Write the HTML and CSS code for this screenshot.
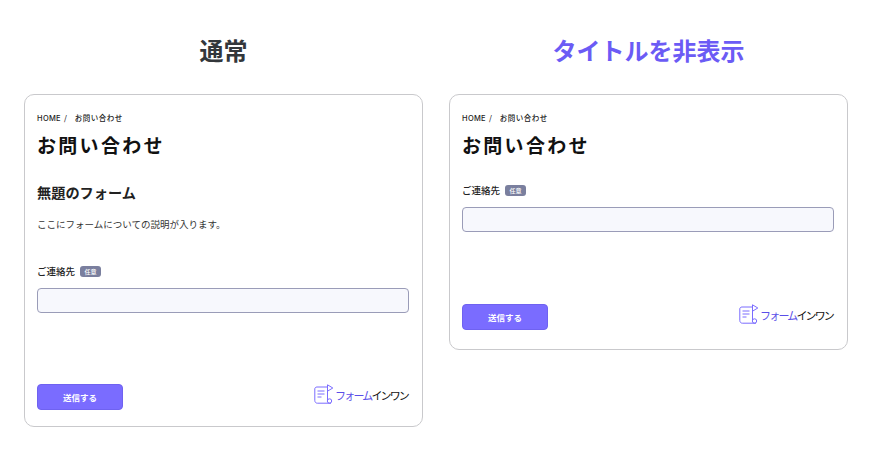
FILE: index.html
```html
<!DOCTYPE html>
<html lang="ja">
<head>
  <meta charset="UTF-8">
  <meta name="viewport" content="width=device-width, initial-scale=1.0">
  <title>タイトルの表示比較</title>
  <link rel="stylesheet" href="styles.css">
</head>
<body>
  <div class="compare">
    <!-- 通常 -->
    <div class="column">
      <h2 class="column-title">通常</h2>
      <div class="form-card">
        <div class="breadcrumb"><span class="home">HOME</span> <span class="slash">/</span> <span>お問い合わせ</span></div>
        <h1 class="page-title">お問い合わせ</h1>
        <h3 class="form-title">無題のフォーム</h3>
        <p class="form-desc">ここにフォームについての説明が入ります。</p>
        <div class="field field-normal">
          <div class="field-label">ご連絡先 <span class="badge">任意</span></div>
          <div class="field-input"></div>
        </div>
        <div class="form-footer">
          <div class="submit">送信する</div>
          <div class="logo">
            <svg class="logo-icon" viewBox="0 0 20 20" fill="none" stroke="#7a6cff" stroke-width="1">
              <path d="M3 3h10.5v13"/>
              <path d="M3 3C1.6 3 .8 3.8.8 5v11.5c0 1.5 1 2.7 2.5 2.7H17"/>
              <path d="M3.5 7h7M3.5 10h7M3.5 13h4"/>
              <path d="M13.5 .8v6.4L18.8 4z"/>
              <circle cx="15.5" cy="17" r="2.2"/>
            </svg>
            <span class="logo-text"><span class="logo-accent">フォーム</span>インワン</span>
          </div>
        </div>
      </div>
    </div>

    <!-- タイトルを非表示 -->
    <div class="column">
      <h2 class="column-title accent">タイトルを非表示</h2>
      <div class="form-card card-hidden">
        <div class="breadcrumb"><span class="home">HOME</span> <span class="slash">/</span> <span>お問い合わせ</span></div>
        <h1 class="page-title">お問い合わせ</h1>
        <div class="field field-hidden">
          <div class="field-label">ご連絡先 <span class="badge">任意</span></div>
          <div class="field-input"></div>
        </div>
        <div class="form-footer">
          <div class="submit">送信する</div>
          <div class="logo">
            <svg class="logo-icon" viewBox="0 0 20 20" fill="none" stroke="#7a6cff" stroke-width="1">
              <path d="M3 3h10.5v13"/>
              <path d="M3 3C1.6 3 .8 3.8.8 5v11.5c0 1.5 1 2.7 2.5 2.7H17"/>
              <path d="M3.5 7h7M3.5 10h7M3.5 13h4"/>
              <path d="M13.5 .8v6.4L18.8 4z"/>
              <circle cx="15.5" cy="17" r="2.2"/>
            </svg>
            <span class="logo-text"><span class="logo-accent">フォーム</span>インワン</span>
          </div>
        </div>
      </div>
    </div>
  </div>
</body>
</html>
```

FILE: styles.css
```css
body {
  margin: 0;
  background-color: white;
  color: #111;
  font-family: "Noto Sans CJK JP", "Noto Sans", sans-serif;
}

.compare {
  display: grid;
  grid-template-columns: 399px 399px;
  gap: 26px;
  padding: 32px 24px 0;
  align-items: start;
}

.column-title {
  margin: 0 0 26px;
  height: 36px;
  line-height: 36px;
  font-size: 24px;
  font-weight: 700;
  text-align: center;
  color: #33373b;
}

.column-title.accent {
  color: #6b5bf5;
}

.form-card {
  box-sizing: border-box;
  padding: 16px 13px 16px 12px;
  background-color: white;
  border: 1px solid #c9c9cc;
  border-radius: 10px;
}

.card-hidden {
  padding-bottom: 19px;
}

.card-hidden .form-footer {
  margin-top: 72px;
}

.breadcrumb {
  height: 14px;
  line-height: 14px;
  font-size: 7.5px;
  font-weight: 500;
  letter-spacing: 0.5px;
  color: #222;
}

.breadcrumb .home {
  font-family: "Inter", sans-serif;
  letter-spacing: 0.3px;
}

.breadcrumb .slash {
  margin: 0 5px 0 1px;
}

.page-title {
  margin: 5px 0 0;
  height: 30px;
  line-height: 30px;
  font-size: 19px;
  font-weight: 700;
  letter-spacing: 2.3px;
  color: #111;
}

.form-title {
  margin: 21px 0 0;
  height: 22px;
  line-height: 22px;
  font-size: 14.2px;
  font-weight: 700;
  color: #222;
}

.form-desc {
  margin: 11px 0 0;
  height: 20px;
  line-height: 20px;
  font-size: 9.5px;
  color: #333;
}

.field-normal {
  margin-top: 29px;
}

.field-hidden {
  margin-top: 22px;
}

.field-label {
  display: flex;
  align-items: center;
  gap: 5px;
  height: 16px;
  font-size: 9.5px;
  font-weight: 500;
  color: #222;
}

.badge {
  display: inline-block;
  width: 21px;
  height: 11px;
  line-height: 11px;
  border-radius: 3px;
  background-color: #7a7f9e;
  color: white;
  font-size: 6px;
  text-align: center;
}

.field-input {
  box-sizing: border-box;
  height: 25px;
  margin-top: 9px;
  background-color: #f7f8fd;
  border: 1px solid #9a9cb8;
  border-radius: 4px;
}

.form-footer {
  display: flex;
  justify-content: space-between;
  align-items: center;
  margin-top: 71px;
}

.submit {
  box-sizing: border-box;
  width: 86px;
  height: 26px;
  line-height: 24px;
  background-color: #7a6cff;
  border: 1px solid #6f62f0;
  border-radius: 4px;
  color: white;
  font-size: 8.5px;
  font-weight: 700;
  text-align: center;
}

.logo {
  display: flex;
  align-items: center;
  gap: 1px;
  margin: 0 1px 4px 0;
}

.logo-icon {
  width: 20px;
  height: 20px;
  margin-bottom: 2px;
}

.logo-text {
  font-size: 11px;
  line-height: 16px;
  letter-spacing: -1.85px;
  color: #111;
}

.logo-accent {
  color: #5a4ee8;
}
```
